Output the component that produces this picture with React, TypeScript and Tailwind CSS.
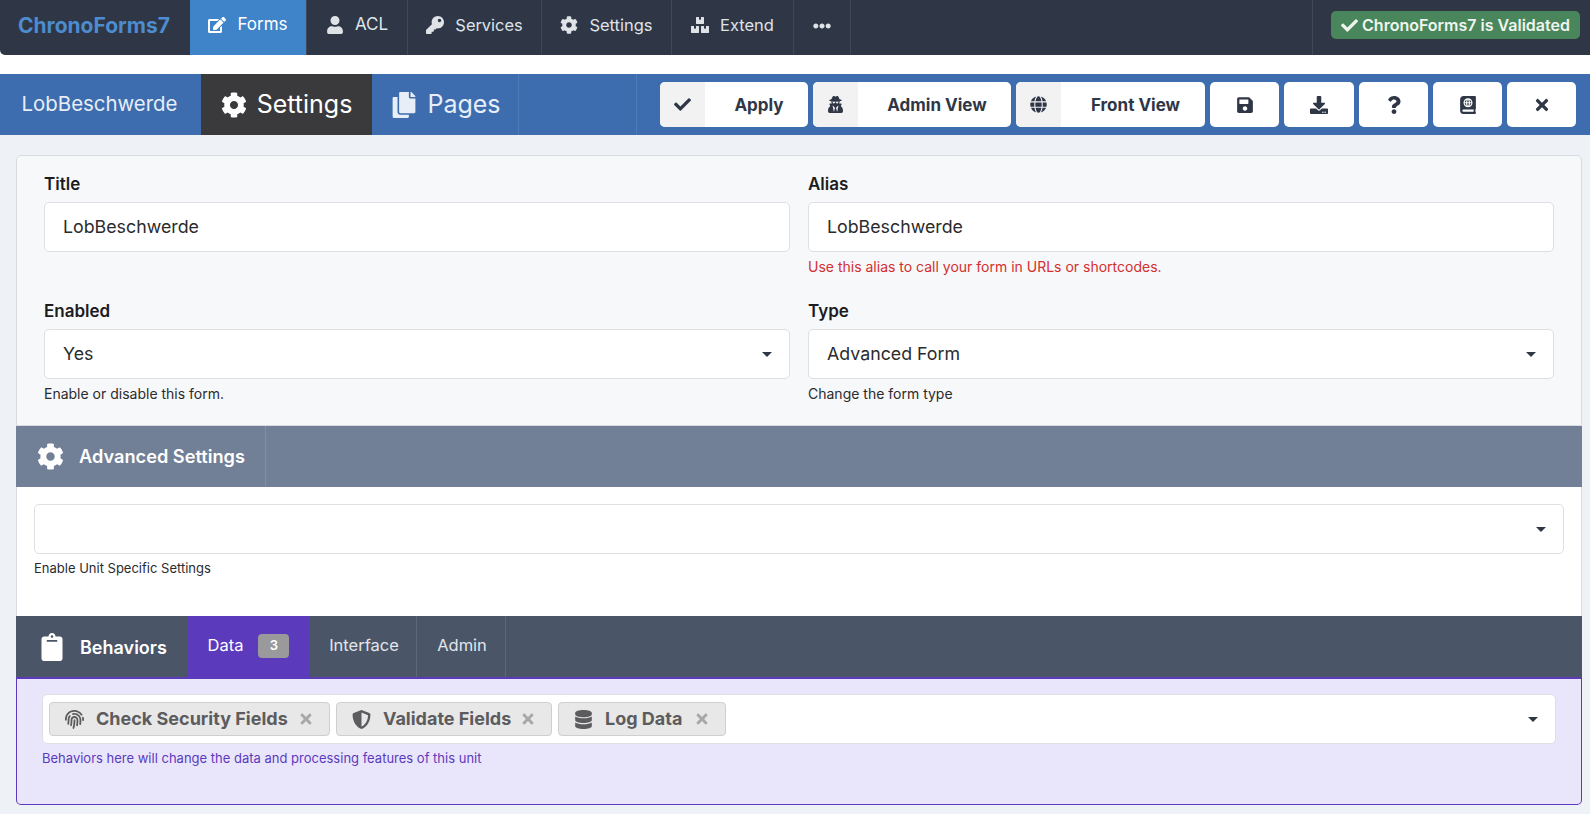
import type { ReactNode } from "react";
import {
  FaAtlas,
  FaBoxes,
  FaCheck,
  FaClipboard,
  FaCog,
  FaCopy,
  FaDatabase,
  FaDownload,
  FaEdit,
  FaEllipsisH,
  FaFingerprint,
  FaGlobe,
  FaKey,
  FaQuestion,
  FaSave,
  FaShieldAlt,
  FaTimes,
  FaUser,
  FaUserSecret,
} from "react-icons/fa";

function NavTab({ icon, label, className, active }: { icon: ReactNode; label: string; className: string; active?: boolean }) {
  return (
    <div
      className={`flex h-full items-center justify-center gap-[11px] border-r border-[#3f4859] pb-[5px] ${className} ${
        active ? "bg-[#3f84c9] text-white" : "text-[#dfe3e8]"
      }`}
    >
      <span className="text-[18px]">{icon}</span>
      {label}
    </div>
  );
}

function ActionButton({ icon, label, className }: { icon: ReactNode; label: string; className: string }) {
  return (
    <div className={`flex h-[45px] items-center overflow-hidden rounded-[5px] bg-white text-[17px] font-bold text-[#2f3747] ${className}`}>
      <div className="flex h-full w-[45px] shrink-0 items-center justify-center bg-[#f2f2f3] text-[17px]">{icon}</div>
      <div className="flex-1 pt-[2px] pl-[5px] text-center">{label}</div>
    </div>
  );
}

function IconButton({ icon, className }: { icon: ReactNode; className: string }) {
  return <div className={`flex h-[45px] items-center justify-center rounded-[5px] bg-white text-[18px] text-[#2f3747] ${className}`}>{icon}</div>;
}

function Caret() {
  return <span className="h-0 w-0 border-x-[5.5px] border-t-[5.5px] border-x-transparent border-t-[#2f3747]" />;
}

function Field({ label, value, select, help, helpClass }: { label: string; value: string; select?: boolean; help?: string; helpClass?: string }) {
  return (
    <div className="flex-1">
      <div className="h-[28px] text-[17px] leading-[28px] font-semibold text-[#1c1c1e]">{label}</div>
      <div className="mt-[4px] flex h-[50px] items-center justify-between rounded-[5px] border border-[#dedfe2] bg-white pr-[17px] pl-[18px] text-[17.8px] text-[#2b2b2d]">
        {value}
        {select && <Caret />}
      </div>
      {help && <div className={`mt-[7px] text-[14px] leading-[16px] ${helpClass}`}>{help}</div>}
    </div>
  );
}

function Chip({ icon, label, className }: { icon: ReactNode; label: string; className: string }) {
  return (
    <div className={`flex h-[34px] items-center rounded-[4px] border border-[#cfcfd1] bg-[#e8e8e8] pl-[15px] text-[18px] font-bold text-[#5c5c5e] ${className}`}>
      <span className="w-[31px] shrink-0 text-[19px]">{icon}</span>
      <span className="flex-1 pb-[2px] whitespace-nowrap">{label}</span>
      <FaTimes className="mr-[15px] text-[16px] text-[#a8a8aa]" />
    </div>
  );
}

export default function App() {
  return (
    <div className="h-[814px] overflow-hidden bg-[#eef2f6] font-['Inter',sans-serif]">
      <div className="bg-white pb-[19px]">
        <div className="flex h-[55px] items-center rounded-bl-[5px] bg-[#2f3747]">
          <div className="flex h-full w-[190px] items-center pb-[3px] pl-[18px] text-[21px] font-bold text-[#4c8ccf]">ChronoForms7</div>
          <NavTab icon={<FaEdit />} label="Forms" className="w-[117px] text-[17px]" active />
          <NavTab icon={<FaUser />} label="ACL" className="w-[101px] text-[17px]" />
          <NavTab icon={<FaKey />} label="Services" className="w-[134px] text-[16.4px]" />
          <NavTab icon={<FaCog />} label="Settings" className="w-[130px] text-[16.5px]" />
          <NavTab icon={<FaBoxes />} label="Extend" className="w-[122px] text-[16.5px]" />
          <div className="flex h-full w-[57px] items-center justify-center border-r border-[#3f4859] pb-[4px] text-[18px] text-[#dfe3e8]">
            <FaEllipsisH />
          </div>
          <div className="h-full w-[462px] border-r border-[#3f4859]" />
          <div className="mb-[5px] ml-[18px] flex h-[28px] w-[249px] items-center justify-center gap-[4px] rounded-[5px] bg-[#4a865b] text-[16px] font-semibold text-[#eef5ef]">
            <FaCheck className="text-[17px]" />
            ChronoForms7 is Validated
          </div>
        </div>
      </div>

      <div className="flex h-[61px] items-center bg-[#3d6dae]">
        <div className="flex h-full w-[201px] items-center justify-center pr-[2px] text-[20.4px] text-[#e8eef7]">LobBeschwerde</div>
        <div className="flex h-full w-[171px] items-center justify-center gap-[10px] bg-[#3a3a3c] text-[25px] text-white">
          <FaCog className="text-[26px]" />
          Settings
        </div>
        <div className="flex h-full w-[147px] items-center justify-center gap-[10px] border-r border-[#4e7cb8] pl-[2px] text-[25px] text-[#e8eef7]">
          <FaCopy className="text-[26px]" />
          Pages
        </div>
        <div className="h-full w-[118px] border-r border-[#4e7cb8]" />
        <div className="ml-[23px] flex gap-[5px]">
          <ActionButton icon={<FaCheck />} label="Apply" className="w-[148px]" />
          <ActionButton icon={<FaUserSecret />} label="Admin View" className="w-[198px]" />
          <ActionButton icon={<FaGlobe />} label="Front View" className="w-[189px]" />
          <IconButton icon={<FaSave />} className="w-[69px]" />
          <IconButton icon={<FaDownload />} className="w-[70px]" />
          <IconButton icon={<FaQuestion />} className="w-[69px]" />
          <IconButton icon={<FaAtlas />} className="w-[69px]" />
          <IconButton icon={<FaTimes />} className="w-[69px]" />
        </div>
      </div>

      <div className="mt-[20px] mr-[8px] ml-[16px]">
        <div className="h-[271px] rounded-t-[5px] border border-[#d9dbe0] bg-[#f7f8fa] pt-[14px] pr-[27px] pl-[27px]">
          <div className="flex gap-[18px]">
            <Field label="Title" value="LobBeschwerde" />
            <Field label="Alias" value="LobBeschwerde" help="Use this alias to call your form in URLs or shortcodes." helpClass="text-[#d32f2f]" />
          </div>
          <div className="mt-[22px] flex gap-[18px]">
            <Field label="Enabled" value="Yes" select help="Enable or disable this form." helpClass="text-[#2b2b2d]" />
            <Field label="Type" value="Advanced Form" select help="Change the form type" helpClass="text-[#2b2b2d]" />
          </div>
        </div>

        <div className="flex h-[61px] items-center bg-[#718096] text-white">
          <div className="flex h-full w-[250px] items-center gap-[15px] border-r border-[#8390a4] pl-[21px] text-[18.2px] font-semibold">
            <FaCog className="text-[27px]" />
            Advanced Settings
          </div>
        </div>

        <div className="h-[129px] border-x border-[#d9dbe0] bg-white px-[17px] pt-[17px]">
          <div className="flex h-[50px] items-center justify-end rounded-[5px] border border-[#dedfe2] pr-[17px]">
            <Caret />
          </div>
          <div className="mt-[6px] text-[13px] leading-[16px] text-[#2b2b2d]">Enable Unit Specific Settings</div>
        </div>

        <div className="flex h-[61px] items-center bg-[#4a5568] text-[16.5px] text-[#e2e6ec]">
          <div className="flex h-full w-[171px] items-center gap-[14px] pl-[22px] text-[18px] font-semibold text-white">
            <FaClipboard className="text-[28px]" />
            <span className="pt-[1px]">Behaviors</span>
          </div>
          <div className="flex h-full w-[123px] items-center justify-center gap-[15px] bg-[#5b3abc] pb-[2px] text-white">
            Data
            <span className="flex h-[24px] w-[31px] items-center justify-center rounded-[4px] bg-[#9a9a9c] text-[13px] font-semibold">3</span>
          </div>
          <div className="flex h-full w-[107px] items-center justify-center border-r border-[#5e6879] pb-[2px] pl-[2px]">Interface</div>
          <div className="flex h-full w-[89px] items-center justify-center border-r border-[#5e6879] pb-[2px] pl-[2px]">Admin</div>
        </div>

        <div className="h-[128px] rounded-b-[5px] border border-t-2 border-[#5b3abc] bg-[#e9e6fc] px-[25px] pt-[15px]">
          <div className="flex h-[50px] items-center justify-between rounded-[5px] border border-[#dedfe2] bg-white pr-[17px] pl-[6px]">
            <div className="flex gap-[6px]">
              <Chip icon={<FaFingerprint />} label="Check Security Fields" className="w-[281px]" />
              <Chip icon={<FaShieldAlt />} label="Validate Fields" className="w-[216px]" />
              <Chip icon={<FaDatabase />} label="Log Data" className="w-[168px]" />
            </div>
            <Caret />
          </div>
          <div className="mt-[6px] text-[13px] leading-[16px] text-[#5b3abc]">Behaviors here will change the data and processing features of this unit</div>
        </div>
      </div>
    </div>
  );
}
